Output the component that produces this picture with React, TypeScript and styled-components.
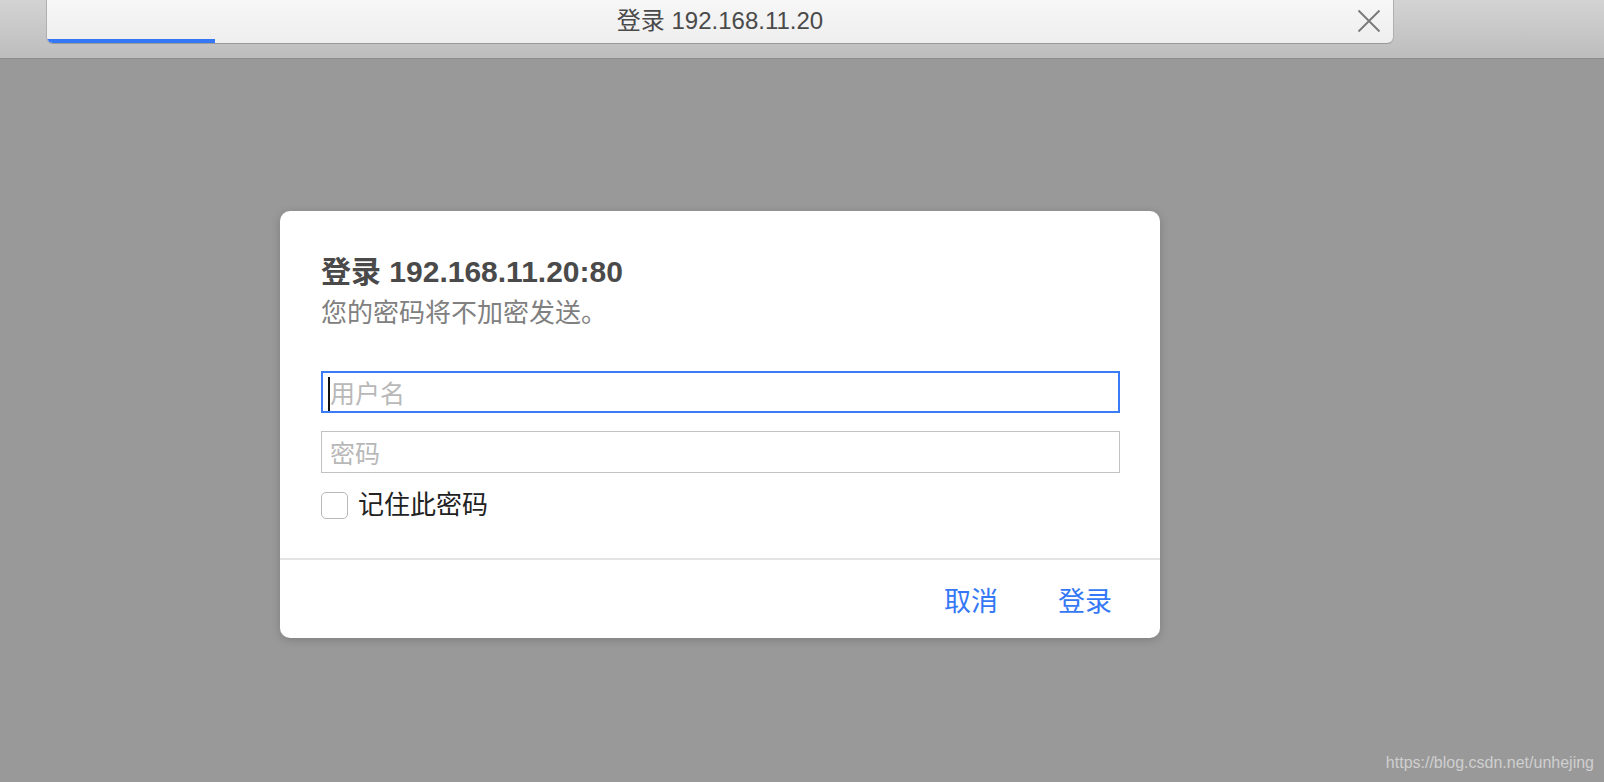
import React from "react";
import styled, { createGlobalStyle } from "styled-components";

const Global = createGlobalStyle`
  html, body { margin: 0; padding: 0; }
  body {
    width: 1604px;
    height: 782px;
    overflow: hidden;
    background: #999999;
    font-family: "Liberation Sans", "Noto Sans CJK SC", sans-serif;
  }
`;

const Page = styled.div`
  position: relative;
  width: 1604px;
  height: 782px;
  display: flex;
  flex-direction: column;
  background: #999999;
`;

const Toolbar = styled.div`
  height: 58px;
  flex: none;
  background: linear-gradient(#d3d3d3, #bdbdbd);
  border-bottom: 1px solid #8b8b8b;
  padding-left: 46px;
  box-sizing: content-box;
`;

const Tab = styled.div`
  width: 1348px;
  height: 44px;
  box-sizing: border-box;
  background: linear-gradient(#f7f7f7, #eeeeee);
  border: 1px solid #b0b0b0;
  border-top: none;
  border-bottom-color: #9a9a9a;
  border-radius: 0 0 7px 7px;
  display: flex;
  flex-direction: column;
  overflow: hidden;
`;

const TabRow = styled.div`
  flex: 1;
  display: grid;
  grid-template-columns: 1fr auto 1fr;
  align-items: center;
`;

const TabTitle = styled.div`
  grid-column: 2;
  font-size: 24px;
  line-height: 30px;
  color: #4a4a4a;
  padding-top: 3px;
`;

const CloseBtn = styled.div`
  grid-column: 3;
  justify-self: end;
  margin-right: 12px;
  width: 24px;
  height: 24px;
  display: flex;
  padding-top: 3px;
`;

const Progress = styled.div`
  height: 4px;
  width: 168px;
  background: #3478f6;
  flex: none;
`;

const Main = styled.div`
  flex: 1;
  padding: 152px 0 0 280px;
`;

const Dialog = styled.div`
  width: 880px;
  height: 427px;
  box-sizing: border-box;
  background: #ffffff;
  border-radius: 10px;
  box-shadow: 0 2px 10px rgba(0, 0, 0, 0.18);
  display: flex;
  flex-direction: column;
`;

const Body = styled.div`
  padding: 42px 40px 0 41px;
  display: flex;
  flex-direction: column;
  flex: 1;
`;

const Title = styled.div`
  font-size: 30px;
  line-height: 38px;
  font-weight: bold;
  color: #4a4a4a;
`;

const Subtitle = styled.div`
  font-size: 26px;
  line-height: 34px;
  color: #808080;
  margin-top: 5px;
`;

const Field = styled.div<{ $focused?: boolean }>`
  position: relative;
  height: 42px;
  box-sizing: border-box;
  border: ${(p) => (p.$focused ? "2px solid #3a7cf5" : "1px solid #c2c2c2")};
  padding-left: ${(p) => (p.$focused ? "7px" : "8px")};
  display: flex;
  align-items: center;
  margin-top: ${(p) => (p.$focused ? "41px" : "18px")};
  font-size: 25px;
  color: #b8b8b8;
`;

const Caret = styled.span`
  position: absolute;
  left: 5px;
  top: 4px;
  width: 2px;
  height: 34px;
  background: #111;
`;

const CheckRow = styled.div`
  display: flex;
  align-items: center;
  gap: 10px;
  margin-top: 17px;
`;

const Box = styled.div`
  width: 27px;
  height: 27px;
  box-sizing: border-box;
  border: 1px solid #b8b8b8;
  border-radius: 5px;
  background: #fff;
`;

const CheckLabel = styled.span`
  font-size: 26px;
  line-height: 30px;
  color: #222222;
`;

const Divider = styled.div`
  height: 2px;
  background: #e4e4e4;
  flex: none;
`;

const Footer = styled.div`
  height: 78px;
  flex: none;
  display: flex;
  justify-content: flex-end;
  align-items: center;
  gap: 60px;
  padding-right: 48px;
  padding-top: 6px;
  box-sizing: border-box;
`;

const Action = styled.span`
  font-size: 27px;
  line-height: 30px;
  color: #3478f6;
`;

const Watermark = styled.div`
  position: absolute;
  right: 10px;
  bottom: 10px;
  font-size: 16px;
  color: #cfcfcf;
  font-family: "Liberation Sans", Arial, sans-serif;
`;

export default function App() {
  return (
    <Page>
      <Global />
      <Toolbar>
        <Tab>
          <TabRow>
            <TabTitle>登录 192.168.11.20</TabTitle>
            <CloseBtn>
              <svg width="24" height="24" viewBox="0 0 24 24">
                <path d="M1.5 1.5 L22.5 22.5 M22.5 1.5 L1.5 22.5" stroke="#787878" strokeWidth="1.8" fill="none" />
              </svg>
            </CloseBtn>
          </TabRow>
          <Progress />
        </Tab>
      </Toolbar>
      <Main>
        <Dialog>
          <Body>
            <Title>登录 192.168.11.20:80</Title>
            <Subtitle>您的密码将不加密发送。</Subtitle>
            <Field $focused>
              <Caret />
              用户名
            </Field>
            <Field>密码</Field>
            <CheckRow>
              <Box />
              <CheckLabel>记住此密码</CheckLabel>
            </CheckRow>
          </Body>
          <Divider />
          <Footer>
            <Action>取消</Action>
            <Action>登录</Action>
          </Footer>
        </Dialog>
      </Main>
      <Watermark>https://blog.csdn.net/unhejing</Watermark>
    </Page>
  );
}
